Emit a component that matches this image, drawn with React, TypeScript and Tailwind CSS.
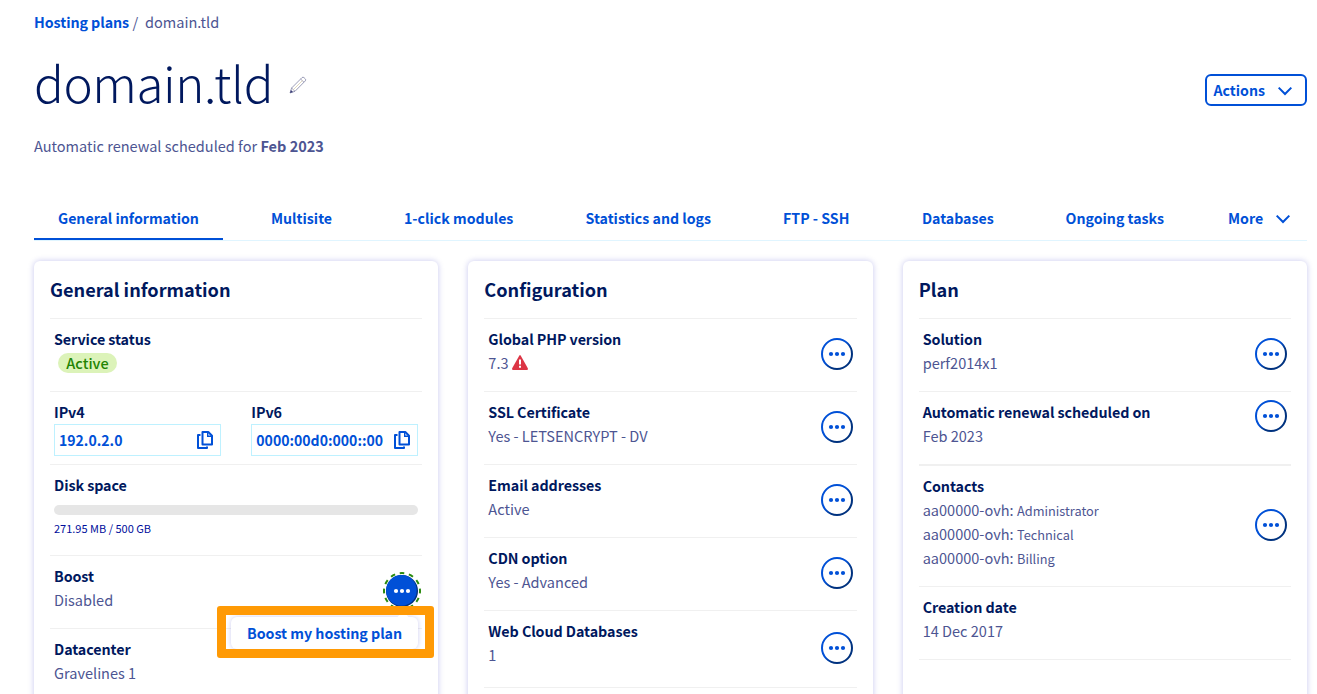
import type { ReactNode } from "react";

function Chevron() {
  return (
    <svg width="16" height="10" viewBox="0 0 16 10" fill="none" className="shrink-0">
      <path d="M1.7 1.6 8 8l6.3-6.4" stroke="#0050d7" strokeWidth="2" />
    </svg>
  );
}

function Pencil() {
  return (
    <svg width="18" height="18" viewBox="0 0 18 18" fill="none" className="shrink-0">
      <path d="M1 17 2.6 12 13 1.6Q14 .6 15.2 1.8l.9.9Q17.300 3.900 16.300 4.900L6 15.300 1 17Z" stroke="#8385a6" strokeWidth=".8" />
      <path d="m2.600 12 3.400 3.300M11.600 3l3.400 3.300" stroke="#8b8ca8" strokeWidth=".8" />
      <path d="m4.500 13.500 9-9" stroke="#d9cfae" strokeWidth=".8" />
      <path d="m1 17 .9-3 2.200 2.100z" fill="#3a3d77" />
    </svg>
  );
}

function CopyIcon() {
  return (
    <svg width="18" height="20" viewBox="0 0 18 20" fill="none" className="shrink-0">
      <path d="M6.500 2h5.800L16 5.700V14.500H6.500Z" stroke="#0050d7" strokeWidth="2" strokeLinejoin="round" />
      <path d="M11.700 2v4.200H16" stroke="#0050d7" strokeWidth="1.400" />
      <path d="M4.500 5H2v13h9v-1.500" stroke="#0050d7" strokeWidth="2" strokeLinejoin="round" />
    </svg>
  );
}

function Warning() {
  return (
    <svg width="16" height="15" viewBox="0 0 16 15" className="-mt-[2px] shrink-0">
      <path d="M7.200.7Q8-.5 8.800.7l7 12.600Q16.300 14.800 15 15H1Q-.3 14.800.2 13.300Z" fill="#dc3545" />
      <path d="M7 4.500h2v5H7zM7 10.800h2v2H7z" fill="#fff" />
    </svg>
  );
}

function Dots({ className }: { className: string }) {
  return (
    <button className={`h-8 w-8 shrink-0 ${className}`} aria-label="Open menu">
      <svg width="32" height="32" viewBox="0 0 32 32" fill="none">
        <defs>
          <linearGradient id="ring" x1="0" y1="0" x2="1" y2="1">
            <stop offset=".45" stopColor="#0050d7" />
            <stop offset=".65" stopColor="#00327f" />
          </linearGradient>
        </defs>
        <circle cx="16" cy="16" r="15" stroke="url(#ring)" strokeWidth="2" />
        <g fill="#0050d7">
          <circle cx="10" cy="16" r="2.100" />
          <circle cx="16" cy="16" r="2.100" />
          <circle cx="22" cy="16" r="2.100" />
        </g>
      </svg>
    </button>
  );
}

function ActiveDots() {
  return (
    <button className="-mr-[3px] mt-4 h-[38px] w-[38px] shrink-0" aria-label="Open menu">
      <svg width="38" height="38" viewBox="0 0 38 38" fill="none">
        <circle cx="19" cy="19" r="16" fill="#00327f" />
        <circle cx="18.400" cy="18.400" r="15.300" fill="#0050d7" />
        <circle cx="19" cy="19" r="18" stroke="#2b8a0e" strokeWidth="2" pathLength="120" strokeDasharray="5 5" strokeDashoffset="2.500" />
        <g fill="#fff">
          <circle cx="13" cy="19" r="2.100" />
          <circle cx="19" cy="19" r="2.100" />
          <circle cx="25" cy="19" r="2.100" />
        </g>
      </svg>
    </button>
  );
}

function Card({ title, children }: { title: string; children: ReactNode }) {
  return (
    <section className="h-[480px] rounded-md bg-white px-4 shadow-[0_0_6px_rgba(0,0,180,0.22)]">
      <h2 className="h-[58px] border-b border-[#f0f0f0] pt-4 text-[18.150px] leading-6 font-bold text-[#00185e]">{title}</h2>
      {children}
    </section>
  );
}

function Label({ children }: { children: ReactNode }) {
  return <dt className="text-[14.300px] leading-6 font-bold tracking-[-0.005em] text-[#00185e]">{children}</dt>;
}

function Row({ label, children, action, className = "border-b pb-4" }: { label: string; children: ReactNode; action?: ReactNode; className?: string }) {
  return (
    <div className={`flex justify-between border-[#f0f0f0] px-1 ${className}`}>
      <dl className="pt-2">
        <Label>{label}</Label>
        <dd className="leading-6">{children}</dd>
      </dl>
      {action}
    </div>
  );
}

function IpField({ label, value }: { label: string; value: string }) {
  return (
    <dl className="w-[167px]">
      <Label>{label}</Label>
      <dd className="flex h-8 items-center justify-between border border-[#bef1ff] pr-[6px] pl-1 text-[14.050px] font-bold text-[#0050d7]">
        <span className="pt-[2px]">{value}</span>
        <CopyIcon />
      </dd>
    </dl>
  );
}

function Contact({ role }: { role: string }) {
  return (
    <span className="flex h-6 items-baseline gap-[3.500px]">
      <span>aa00000-ovh:</span>
      <span className="text-[12.750px]">{role}</span>
    </span>
  );
}

const tabs = [
  { name: "Multisite", width: "w-[133px]" },
  { name: "1-click modules", width: "w-[181.500px]" },
  { name: "Statistics and logs", width: "w-[197.500px]" },
  { name: "FTP - SSH", width: "w-[139px]" },
  { name: "Databases", width: "w-[143.500px]" },
  { name: "Ongoing tasks", width: "w-[162.500px]" },
];

export default function App() {
  return (
    <div className="h-[694px] overflow-hidden bg-white pr-[10px] pl-[34px] font-['Noto_Sans_CJK_SC',sans-serif] text-[14.540px] text-[#4d5592]">
      <nav className="flex h-[46px] items-center pb-[3px] leading-6 whitespace-pre">
        <a className="text-[14.250px] font-bold tracking-[-0.004em] text-[#0050d7]">Hosting plans</a>
        <span className="pl-[3.500px]">/</span>
        <span className="pl-[6.700px]">domain.tld</span>
      </nav>
      <header className="flex h-[88px] justify-between">
        <div className="flex">
          <h1 className="pt-[6px] text-[49.300px] leading-[60px] font-light tracking-[-0.008em] text-[#00185e]">domain.tld</h1>
          <span className="mt-[30px] ml-4">
            <Pencil />
          </span>
        </div>
        <button className="mt-7 flex h-8 w-[102px] items-center justify-between rounded-md border-2 border-[#0050d7] pr-3 pl-[6.500px] text-[14.150px] leading-6 font-bold text-[#0050d7]">
          <span>Actions</span>
          <span className="pt-px">
            <Chevron />
          </span>
        </button>
      </header>
      <p className="leading-6">
        Automatic renewal scheduled for <b className="text-[14.500px]">Feb 2023</b>
      </p>
      <nav className="mt-[38px] flex h-[45px] border-b border-[#e0f5ff] text-[14.170px] leading-6 font-bold text-[#0050d7]">
        <div className="w-[213px]">
          <a className="block h-11 w-[189px] border-b-2 border-[#0050d7] pt-[10px] pl-6">General information</a>
        </div>
        {tabs.map((t) => (
          <a key={t.name} className={`pt-[10px] pl-6 ${t.width}`}>
            {t.name}
          </a>
        ))}
        <a className="flex gap-3 pt-[10px] pl-6">
          More
          <span className="pt-2">
            <Chevron />
          </span>
        </a>
      </nav>
      <main className="grid grid-cols-3 gap-[30px] pt-5">
        <Card title="General information">
          <Row label="Service status">
            <span className="mt-[2px] ml-1 block h-5 w-[59px] rounded-full bg-[#dcf3b9] text-center text-[14.500px] leading-5 font-medium text-[#228403]">Active</span>
            <span className="block h-[2px]" />
          </Row>
          <div className="flex justify-between border-b border-[#f0f0f0] px-1 pt-2 pb-2">
            <IpField label="IPv4" value="192.0.2.0" />
            <IpField label="IPv6" value="0000:00d0:000::00" />
          </div>
          <dl className="h-[91px] border-b border-[#f0f0f0] px-1 pt-2">
            <Label>Disk space</Label>
            <dd className="mt-2 h-[10px] rounded-full bg-[#e6e6e6]" />
            <dd className="mt-[3px] text-[11px] leading-5 text-[#000e9c]">271.95 MB / 500 GB</dd>
          </dl>
          <div className="relative">
            <Row label="Boost" action={<ActiveDots />} className="h-[73px] border-b">
              Disabled
            </Row>
            <div className="absolute top-[61px] left-[181px] h-8 w-[187px] rounded-md bg-white shadow-[0_0_5px_rgba(0,0,180,0.2)]">
              <span className="absolute -top-[3px] right-[9px] h-3 w-3 rotate-45 bg-white" />
              <a className="relative block pl-4 text-[14.250px] leading-8 font-bold tracking-[-0.002em] text-[#0050d7]">Boost my hosting plan</a>
            </div>
            <div className="absolute top-[50px] left-[167px] h-[52px] w-[217px] rounded-[3px] border-9 border-[#ff9a05]" />
          </div>
          <Row label="Datacenter">Gravelines 1</Row>
        </Card>
        <Card title="Configuration">
          <Row label="Global PHP version" action={<Dots className="mt-[19px]" />}>
            <span className="flex items-center gap-[3px]">
              7.3 <Warning />
            </span>
          </Row>
          <Row label="SSL Certificate" action={<Dots className="mt-[19px]" />}>Yes - LETSENCRYPT - DV</Row>
          <Row label="Email addresses" action={<Dots className="mt-[19px]" />}>Active</Row>
          <Row label="CDN option" action={<Dots className="mt-[19px]" />}>Yes - Advanced</Row>
          <Row label="Web Cloud Databases" action={<Dots className="mt-[21px]" />} className="border-b pb-5">1</Row>
        </Card>
        <Card title="Plan">
          <Row label="Solution" action={<Dots className="mt-[19px]" />}>perf2014x1</Row>
          <Row label="Automatic renewal scheduled on" action={<Dots className="mt-2" />} className="border-b-2 pb-4">Feb 2023</Row>
          <Row label="Contacts" action={<Dots className="mt-[43px]" />}>
            <Contact role="Administrator" />
            <Contact role="Technical" />
            <Contact role="Billing" />
          </Row>
          <Row label="Creation date">14 Dec 2017</Row>
        </Card>
      </main>
    </div>
  );
}
